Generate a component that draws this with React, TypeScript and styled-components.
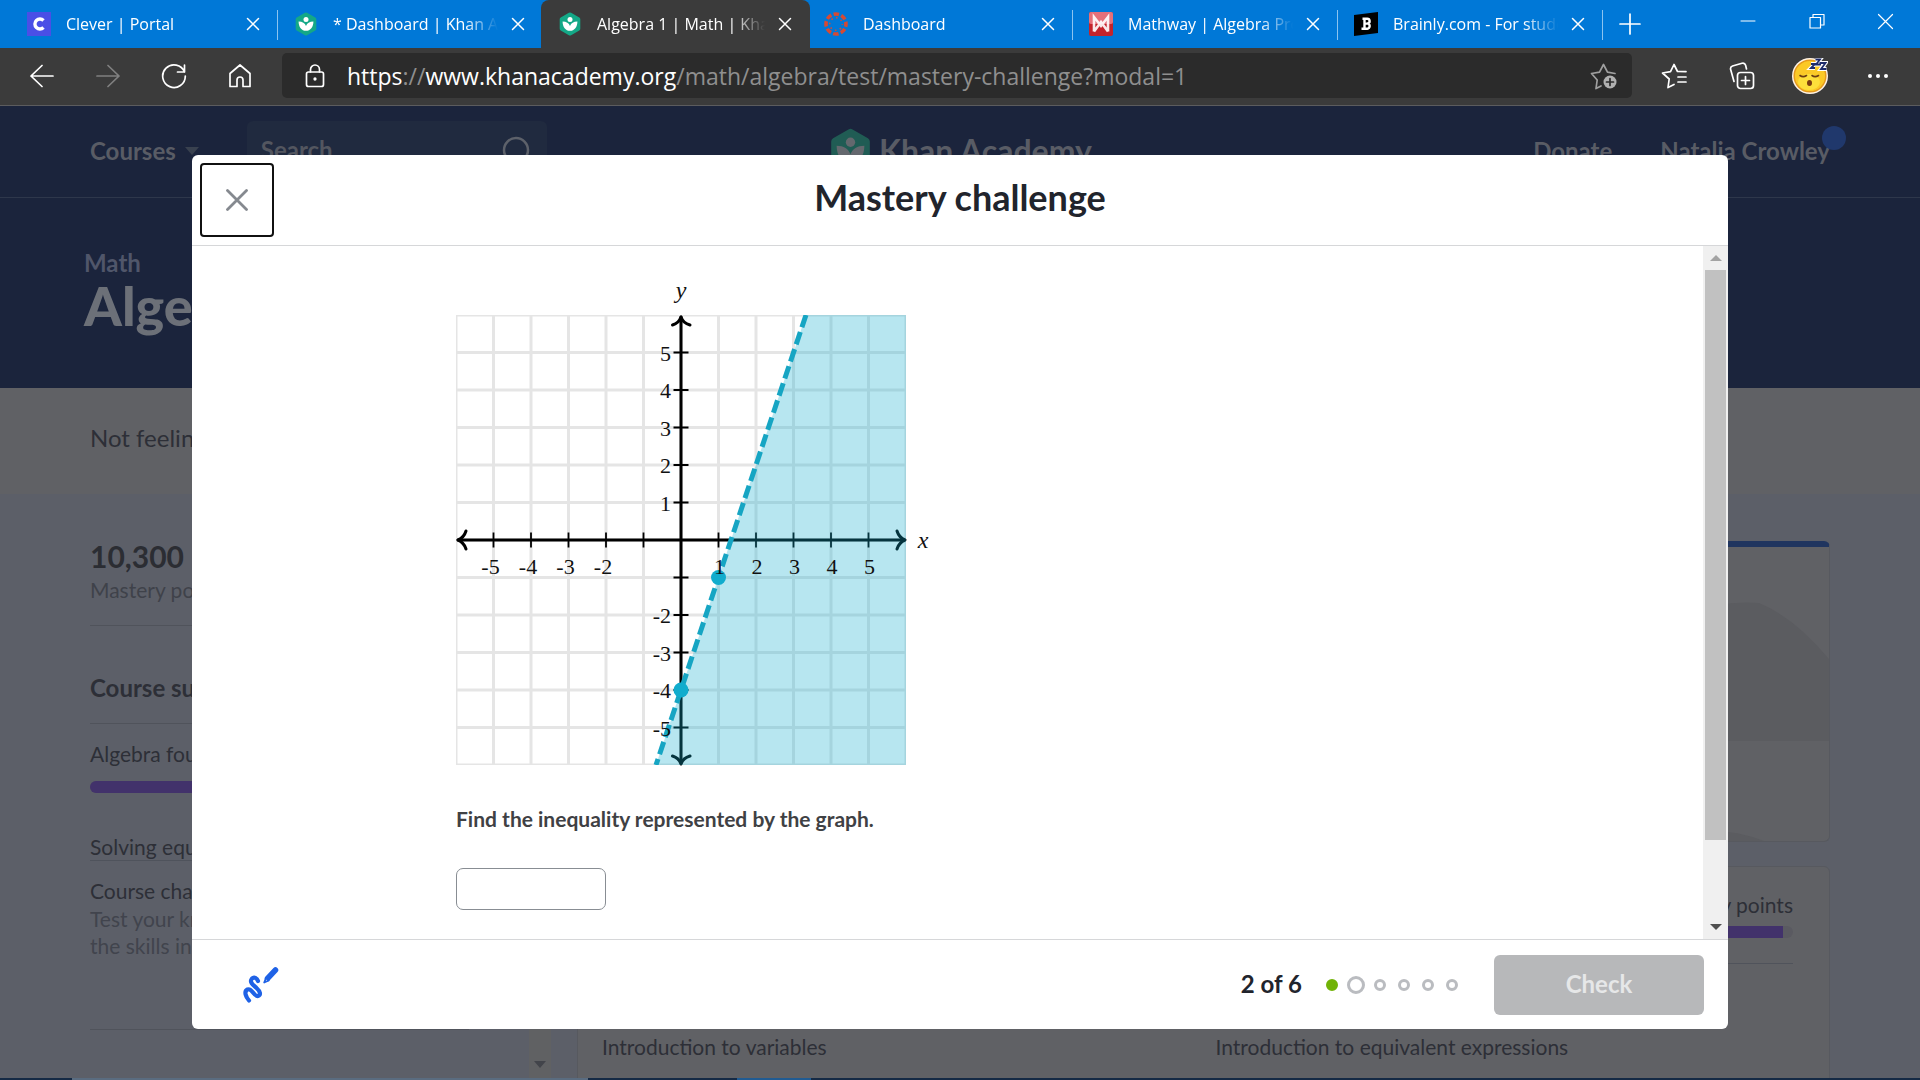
import React from "react";
import styled, { createGlobalStyle } from "styled-components";

const ui = `"Open Sans", "Noto Sans", sans-serif`;
const lato = `Lato, "Noto Sans", sans-serif`;

const GlobalStyle = createGlobalStyle`
  *, *::before, *::after { box-sizing: border-box; }
  body { margin: 0; font-family: ${lato}; }
  button, input { font: inherit; color: inherit; }
  button { border: 0; padding: 0; background: none; cursor: pointer; }
  h1, h2, p { margin: 0; }
  a { color: inherit; text-decoration: none; }
  svg { display: block; flex: none; }
`;

/* ---------- browser window ---------- */

const Screen = styled.div`
  display: flex;
  flex-direction: column;
  height: 100vh;
  overflow: hidden;
`;

const TabStrip = styled.div`
  flex: none;
  display: flex;
  height: 48px;
  background: #0078d7;
  color: #fff;
  font: 16px/24px ${ui};
`;

const Tab = styled.div<{ $active?: boolean; $first?: boolean; $divider?: boolean }>`
  position: relative;
  display: flex;
  align-items: center;
  width: ${(p) => (p.$first ? 278 : p.$active ? 269 : 265)}px;
  margin: 0 ${(p) => (p.$active ? -2 : 0)}px;
  padding: 0 13px 0 ${(p) => (p.$first ? 27 : p.$active ? 17 : 16)}px;
  background: ${(p) => (p.$active ? "#3b3b3b" : "transparent")};
  border-radius: ${(p) => (p.$active ? "8px 8px 0 0" : "0")};
  &::after {
    content: "";
    position: absolute;
    right: 0;
    top: 10px;
    width: 1px;
    height: 30px;
    background: ${(p) => (p.$divider ? "#8cc4f0" : "transparent")};
  }
`;

const TabTitle = styled.span`
  flex: 1;
  min-width: 0;
  margin: 0 8px 0 15px;
  overflow: hidden;
  white-space: nowrap;
  mask-image: linear-gradient(to right, #000 calc(100% - 34px), transparent);
`;

const TabClose = styled.button`
  display: grid;
  place-items: center;
  width: 24px;
  height: 24px;
`;

const NewTab = styled.button`
  display: grid;
  place-items: center;
  width: 54px;
`;

const WindowButtons = styled.div`
  display: flex;
  height: 42px;
  margin-left: auto;
`;

const WindowButton = styled.button`
  display: grid;
  place-items: center;
  width: 69px;
`;

const Toolbar = styled.div`
  flex: none;
  display: flex;
  align-items: center;
  height: 58px;
  padding: 0 8px 2px 9px;
  background: #3b3b3b;
  border-bottom: 1px solid #5c5c5e;
`;

const ToolButton = styled.button<{ $wide?: boolean }>`
  display: grid;
  place-items: center;
  width: ${(p) => (p.$wide ? 68 : 66)}px;
  height: 45px;
`;

const AddressBar = styled.div`
  flex: 1;
  display: flex;
  align-items: center;
  gap: 21px;
  height: 45px;
  margin: 0 8px 0 9px;
  padding: 0 14px 0 22px;
  border-radius: 5px;
  background: #2b2b2b;
`;

const Url = styled.div`
  flex: 1;
  color: #8f8f8f;
  font: 23px/30px ${ui};
  b { color: #fff; font-weight: 400; }
`;

/* ---------- dimmed course page ---------- */

const Page = styled.div`
  position: relative;
  flex: 1;
  min-height: 0;
  display: flex;
  flex-direction: column;
  overflow: hidden;
  background: #5c5f68;
  color: #2d2f37;
  font-size: 21px;
  line-height: 28px;
`;

const SiteHeader = styled.header`
  flex: none;
  display: grid;
  grid-template-columns: 1fr auto 1fr;
  align-items: center;
  height: 92px;
  padding: 0 90px 2px;
  background: #1b243c;
  border-bottom: 1px solid #2e374b;
  color: #595c65;
  font-size: 24px;
  font-weight: 700;
`;

const HeaderLeft = styled.div`
  display: flex;
  align-items: center;
  gap: 48px;
`;

const CoursesLink = styled.a`
  display: flex;
  align-items: center;
  gap: 9px;
`;

const SearchBox = styled.label`
  display: flex;
  align-items: center;
  width: 300px;
  height: 60px;
  padding: 0 14px;
  border-radius: 6px;
  background: #202a3f;
  input {
    flex: 1;
    min-width: 0;
    padding: 0 0 2px;
    border: 0;
    background: none;
  }
  input::placeholder { color: #53565f; opacity: 1; }
`;

const Brand = styled.a`
  display: flex;
  align-items: center;
  gap: 6px;
  font-size: 32px;
`;

const HeaderRight = styled.nav`
  display: flex;
  justify-content: flex-end;
  gap: 48px;
`;

const UserLink = styled.a`
  position: relative;
  &::after {
    content: "";
    position: absolute;
    right: -16px;
    top: -11px;
    width: 24px;
    height: 24px;
    border-radius: 50%;
    background: #20386c;
  }
`;

const Hero = styled.section`
  flex: none;
  height: 190px;
  padding: 53px 84px 0;
  background: #1b243c;
  color: #6c7078;
`;

const Crumb = styled.a`
  display: block;
  color: #50566a;
  font-size: 24px;
  font-weight: 700;
  line-height: 24px;
`;

const CourseTitle = styled.h1`
  font-size: 54px;
  font-weight: 900;
  line-height: 62px;
`;

const Notice = styled.p`
  flex: none;
  height: 106px;
  padding: 34px 90px 0;
  background: #606165;
  font-size: 24px;
  line-height: 32px;
`;

const Columns = styled.div`
  flex: 1;
  min-height: 0;
  display: flex;
  padding-right: 90px;
`;

const Sidebar = styled.aside`
  flex: none;
  display: flex;
  width: 577px;
  padding-right: 26px;
`;

const SidebarBody = styled.div`
  flex: 1;
  padding: 44px 60px 0 90px;
`;

const SidebarRail = styled.div`
  display: flex;
  align-items: flex-end;
  justify-content: center;
  width: 22px;
  padding-bottom: 10px;
  background: #606163;
`;

const Points = styled.p`
  color: #2b2d33;
  font-size: 30px;
  font-weight: 700;
  line-height: 36px;
`;

const PointsLabel = styled.p`
  margin-top: 2px;
  color: #3f424a;
`;

const Rule = styled.hr<{ $gap: number }>`
  height: 1px;
  margin: ${(p) => p.$gap}px 0 0;
  border: 0;
  background: #50535b;
`;

const SummaryTitle = styled.h2`
  margin-top: 46px;
  font-size: 24px;
  font-weight: 700;
  line-height: 32px;
`;

const UnitLink = styled.a<{ $gap: number; $underline?: boolean }>`
  display: block;
  margin-top: ${(p) => p.$gap}px;
  white-space: nowrap;
  line-height: ${(p) => (p.$underline ? 26 : 28)}px;
  border-bottom: ${(p) => (p.$underline ? "1px solid #4f535c" : "0")};
`;

const Meter = styled.div<{ $gap: number }>`
  height: 12px;
  margin-top: ${(p) => p.$gap}px;
  border-radius: 6px;
  overflow: hidden;
  background: #5a5a61;
`;

const MeterFill = styled.div`
  height: 100%;
  background: #42326b;
`;

const Hint = styled.p`
  width: 240px;
  color: #41444d;
  line-height: 27px;
`;

const Main = styled.main`
  flex: 1;
  min-width: 0;
  padding-top: 47px;
`;

const HeroCard = styled.div`
  display: flex;
  justify-content: flex-end;
  height: 301px;
  border: 1px solid #57595f;
  border-top: 6px solid #20355f;
  border-radius: 6px;
  background: #606165;
`;

const UnitCard = styled.div`
  height: 240px;
  margin-top: 24px;
  padding: 24px 36px 0 24px;
  border: 1px solid #57595f;
  border-radius: 6px;
  background: #606165;
`;

const MasteryLabel = styled.p`
  text-align: right;
`;

const LessonGrid = styled.div`
  display: grid;
  grid-template-columns: 1fr 1fr;
  column-gap: 36px;
  margin-top: 69px;
`;

const Taskbar = styled.div`
  flex: none;
  display: flex;
  height: 2px;
  background: #152a45;
`;

const TaskSegment = styled.div<{ $width: number; $color: string }>`
  width: ${(p) => p.$width}px;
  background: ${(p) => p.$color};
`;

/* ---------- dialog ---------- */

const Overlay = styled.div`
  position: absolute;
  inset: 0;
  display: flex;
  padding: 49px 10%;
`;

const Dialog = styled.div`
  flex: 1;
  display: flex;
  flex-direction: column;
  overflow: hidden;
  border-radius: 6px;
  background: #fff;
  color: #21242c;
`;

const DialogHeader = styled.div`
  flex: none;
  display: grid;
  grid-template-columns: 1fr auto 1fr;
  align-items: center;
  height: 91px;
  padding: 0 8px;
  border-bottom: 1px solid #d6d7d9;
`;

const CloseButton = styled.button`
  display: grid;
  place-items: center;
  width: 74px;
  height: 74px;
  border: 2px solid #111;
  border-radius: 4px;
`;

const DialogTitle = styled.h2`
  padding-bottom: 6px;
  font-size: 36px;
  font-weight: 700;
  line-height: 44px;
`;

const DialogBody = styled.div`
  flex: 1;
  min-height: 0;
  display: flex;
`;

const Exercise = styled.div`
  flex: 1;
  padding: 30px 0 0 264px;
  overflow: hidden;
`;

const Question = styled.label`
  display: block;
  margin-top: 37px;
  color: #3f4144;
  font-size: 21px;
  font-weight: 700;
  line-height: 32px;
`;

const Answer = styled.input`
  display: block;
  width: 150px;
  height: 42px;
  margin-top: 33px;
  padding: 0 10px;
  border: 1px solid #888d93;
  border-radius: 7px;
  background: #fff;
`;

const Rail = styled.div`
  flex: none;
  display: flex;
  flex-direction: column;
  width: 25px;
  padding: 0 2px;
  background: #f0f0f0;
`;

const RailArrow = styled.button`
  flex: none;
  display: grid;
  place-items: center;
  height: 24px;
`;

const RailThumb = styled.div`
  flex: 570;
  background: #c1c1c1;
`;

const RailSpace = styled.div`
  flex: 75;
`;

const DialogFooter = styled.div`
  flex: none;
  display: flex;
  align-items: center;
  height: 90px;
  padding: 0 24px 0 50px;
  border-top: 1px solid #d6d7d9;
  font-size: 24px;
  font-weight: 700;
`;

const Progress = styled.div`
  margin-left: auto;
  padding-bottom: 2px;
`;

const Dots = styled.div`
  display: flex;
  align-items: center;
  gap: 12px;
  margin: 0 36px 0 24px;
`;

const Dot = styled.span<{ $state: "done" | "current" | "todo" }>`
  width: ${(p) => (p.$state === "current" ? 18 : 12)}px;
  height: ${(p) => (p.$state === "current" ? 18 : 12)}px;
  margin: 0 ${(p) => (p.$state === "current" ? -3 : 0)}px;
  border: 3px solid ${(p) => (p.$state === "done" ? "#71b307" : "#babcc0")};
  border-radius: 50%;
  background: ${(p) => (p.$state === "done" ? "#71b307" : "#fff")};
`;

const CheckButton = styled.button`
  width: 210px;
  height: 60px;
  padding-bottom: 2px;
  border-radius: 6px;
  background: #b7b8ba;
  color: #e6e7e8;
`;

/* ---------- drawings ---------- */

const Cross = ({ size, color, width = 1.5 }: { size: number; color: string; width?: number }) => (
  <svg width={size} height={size} viewBox={`0 0 ${size} ${size}`} stroke={color} strokeWidth={width} strokeLinecap="round">
    <path d={`M1.5 1.5L${size - 1.5} ${size - 1.5}M${size - 1.5} 1.5L1.5 ${size - 1.5}`} />
  </svg>
);

const Leaf = ({ size, hex, leaf }: { size: number; hex: string; leaf: string }) => (
  <svg width={size} height={size} viewBox="0 0 24 24">
    <path d="M10.9.8a2 2 0 0 1 2.2 0l8.2 4.7a2 2 0 0 1 1 1.8v9.4a2 2 0 0 1-1 1.8l-8.2 4.7a2 2 0 0 1-2.2 0l-8.200-4.700a2 2 0 0 1-1-1.800V7.300a2 2 0 0 1 1-1.800z" fill={hex} />
    <circle cx="12" cy="7.600" r="2.500" fill={leaf} />
    <path d="M12 14c1-3 3.600-4.600 7.400-4.600 0 5.600-3 9.300-7.400 9.300S4.600 15 4.600 9.400C8.400 9.400 11 11 12 14z" fill={leaf} />
  </svg>
);

const CleverIcon = () => (
  <svg width="24" height="24" viewBox="0 0 24 24">
    <rect width="24" height="24" fill="#4a4fe6" />
    <path d="M16.500 8.500A5 5 0 1 0 16.500 15.500" fill="none" stroke="#fff" strokeWidth="3.400" />
  </svg>
);

const CanvasIcon = () => (
  <svg width="24" height="24" viewBox="0 0 24 24" fill="none" stroke="#d64a33">
    <circle cx="12" cy="12" r="10" strokeWidth="3.600" strokeDasharray="5.450 2.400" strokeDashoffset="2.700" />
    <circle cx="12" cy="12" r="6.300" strokeWidth="1.600" strokeDasharray="1.500 3.448" strokeDashoffset="0.700" />
  </svg>
);

const MathwayIcon = () => (
  <svg width="24" height="24" viewBox="0 0 24 24">
    <rect width="24" height="24" rx="2" fill="#c4232b" />
    <rect width="24" height="12" rx="2" fill="#e5707a" />
    <path d="M5 19.500V5L12 14l7-9v14.500M5 19.500L12 10l7 9.500" fill="none" stroke="#fff" strokeWidth="2.600" strokeOpacity="0.900" />
  </svg>
);

const BrainlyIcon = () => (
  <svg width="24" height="24" viewBox="0 0 24 24">
    <path d="M0 3L24 0v21L0 24z" fill="#000" />
    <path d="M8.500 6.800h4.800a2.400 2.400 0 0 1 .6 4.700 2.700 2.700 0 0 1-.6 5.200H7.500M10.500 7v9.500M10.500 11.600h3" fill="none" stroke="#fff" strokeWidth="2.400" />
  </svg>
);

const SleepyFace = () => (
  <svg width="36" height="36" viewBox="0 0 36 36">
    <circle cx="18" cy="18" r="18" fill="#fff3e6" />
    <circle cx="18" cy="18" r="15.800" fill="#fbc926" stroke="#e59a1c" strokeWidth="1.500" />
    <ellipse cx="17" cy="24" rx="11" ry="8" fill="#fddf3b" />
    <path d="M8 17.500q3 2.200 6.500 0M20 17.500q3 2.200 6.500 0" fill="none" stroke="#6b3c12" strokeWidth="1.600" strokeLinecap="round" />
    <ellipse cx="17.500" cy="25" rx="2.500" ry="3" fill="#7a3b10" />
    <path d="M19 6h4l-4 4h4M23.500 1.500h4.500l-4 5h5M27.500 5h6l-4.500 6h5.500" fill="none" stroke="#fff" strokeWidth="4" />
    <path d="M19 6h4l-4 4h4M23.500 1.500h4.500l-4 5h5M27.500 5h6l-4.500 6h5.500" fill="none" stroke="#1d2b6b" strokeWidth="1.800" />
  </svg>
);

const Line = ({ w, h, color = "#fff", children }: { w: number; h: number; color?: string; children: React.ReactNode }) => (
  <svg width={w} height={h} viewBox={`0 0 ${w} ${h}`} fill="none" stroke={color} strokeWidth="1.700" strokeLinecap="round" strokeLinejoin="round">
    {children}
  </svg>
);

const Triangle = ({ up, color, w = 12, h = 6 }: { up?: boolean; color: string; w?: number; h?: number }) => (
  <svg width={w} height={h} viewBox="0 0 12 6" preserveAspectRatio="none" fill={color}>
    <path d={up ? "M0 6L6 0l6 6z" : "M0 0h12L6 6z"} />
  </svg>
);

/* One grid unit is 37.5px; the plane runs from -6 to 6 on both axes. */
const UNIT = 37.5;
const OX = 225;
const OY = 264;
const px = (x: number) => OX + x * UNIT;
const py = (y: number) => OY - y * UNIT;
const ticks = [-5, -4, -3, -2, -1, 1, 2, 3, 4, 5];
const gridLines = Array.from({ length: 13 }, (_, i) => i - 6);

const GraphSvg = styled.svg`
  font: 22px "Liberation Serif", serif;
  overflow: visible;
`;

const Graph = () => (
  <GraphSvg width="480" height="490" viewBox="0 0 480 490" role="img" aria-label="Graph of an inequality">
    <defs>
      <clipPath id="plane">
        <rect x={px(-6)} y={py(6)} width={UNIT * 12} height={UNIT * 12} />
      </clipPath>
    </defs>
    <g clipPath="url(#plane)" stroke="#e5e5e5" strokeWidth="3">
      {gridLines.map((n) => (
        <path key={n} d={`M${px(n)} ${py(6)}V${py(-6)}M${px(-6)} ${py(n)}H${px(6)}`} />
      ))}
    </g>
    <g fill="none" stroke="#000" strokeWidth="3" strokeLinecap="round" strokeLinejoin="round">
      <path d={`M${px(-6) + 2} ${OY}H${px(6) - 2}M${OX} ${py(6) + 2}V${py(-6) - 2}`} />
      <path d={`M${px(6) - 9} ${OY - 9}q2 6.500 8 9q-6 2.500-8 9`} />
      <path d={`M${px(-6) + 10} ${OY - 9}q-2 6.500-8 9q6 2.500 8 9`} />
      <path d={`M${OX - 8.500} ${py(6) + 10}q6.500-2 8.500-8q2 6 9 8`} />
      <path d={`M${OX - 8.500} ${py(-6) - 9}q6.500 2 8.500 8q2-6 9-8`} />
    </g>
    <g stroke="#000" strokeWidth="1.800">
      {ticks.map((n) => (
        <path key={n} d={`M${px(n)} ${OY - 7.500}v15M${OX - 7.500} ${py(n)}h15`} />
      ))}
    </g>
    <path d={`M${px(10 / 3)} ${py(6)}H${px(6)}V${py(-6)}H${px(-2 / 3)}Z`} fill="#11accd" fillOpacity="0.300" />
    <path
      d={`M${px(10 / 3)} ${py(6)}L${px(-2 / 3)} ${py(-6)}`}
      clipPath="url(#plane)"
      stroke="#16a5c3"
      strokeWidth="5"
      strokeDasharray="13 5"
    />
    <circle cx={px(1)} cy={py(-1)} r="7.500" fill="#11accd" />
    <circle cx={px(0)} cy={py(-4)} r="7.500" fill="#11accd" />
    <g fill="#111">
      {ticks.filter((n) => n !== -1).map((n) => (
        <React.Fragment key={n}>
          <text x={px(n) + (n < 0 ? -3 : 1)} y={OY + 34} textAnchor="middle">{n}</text>
          <text x={OX - 10} y={py(n) + 8} textAnchor="end">{n}</text>
        </React.Fragment>
      ))}
      <g fontSize="24" fontStyle="italic">
        <text x={OX} y="22" textAnchor="middle">y</text>
        <text x={px(6) + 17} y={OY + 8} textAnchor="middle">x</text>
      </g>
    </g>
  </GraphSvg>
);

const khan = <Leaf size={24} hex="#14a887" leaf="#fff" />;

const tabs = [
  { title: "Clever | Portal", icon: <CleverIcon />, divider: true },
  { title: "* Dashboard | Khan Academy", icon: khan },
  { title: "Algebra 1 | Math | Khan Academy", icon: khan, active: true },
  { title: "Dashboard", icon: <CanvasIcon />, divider: true },
  { title: "Mathway | Algebra Problem Solver", icon: <MathwayIcon />, divider: true },
  { title: "Brainly.com - For students", icon: <BrainlyIcon />, divider: true },
];

const dots = ["done", "current", "todo", "todo", "todo", "todo"] as const;

export default function App() {
  return (
    <Screen>
      <GlobalStyle />
      <TabStrip>
        {tabs.map((t, i) => (
          <Tab key={t.title} $first={i === 0} $active={t.active} $divider={t.divider}>
            {t.icon}
            <TabTitle>{t.title}</TabTitle>
            <TabClose aria-label="Close tab"><Cross size={14} color="#fff" /></TabClose>
          </Tab>
        ))}
        <NewTab aria-label="New tab">
          <Line w={22} h={22}><path d="M11 1v20M1 11h20" /></Line>
        </NewTab>
        <WindowButtons>
          <WindowButton aria-label="Minimize"><Line w={16} h={16}><path d="M1 8h14" strokeWidth="1" /></Line></WindowButton>
          <WindowButton aria-label="Restore">
            <Line w={16} h={16}><path d="M1 4.500h10.500V15H1zM4 4V1.500h11V12h-3" strokeWidth="1.200" /></Line>
          </WindowButton>
          <WindowButton aria-label="Close"><Cross size={17} color="#fff" width={1.2} /></WindowButton>
        </WindowButtons>
      </TabStrip>

      <Toolbar>
        <ToolButton aria-label="Back"><Line w={24} h={24}><path d="M23 12H1M12 1.500L1 12l11 10.500" /></Line></ToolButton>
        <ToolButton aria-label="Forward"><Line w={24} h={24} color="#808080"><path d="M1 12h22M12 1.500L23 12 12 22.500" /></Line></ToolButton>
        <ToolButton aria-label="Refresh"><Line w={26} h={26}><path d="M23.500 9A11.300 11.300 0 1 0 24.300 13M23.500 2v7h-7" /></Line></ToolButton>
        <ToolButton aria-label="Home">
          <Line w={24} h={26}><path d="M2 10.500L12 2l10 8.500V23.500h-7V17a3 3 0 0 0-6 0v6.500H2z" /></Line>
        </ToolButton>
        <AddressBar>
          <Line w={22} h={26}>
            <rect x="2.500" y="9" width="17" height="14.500" rx="2" />
            <path d="M6.500 9V6.500a4.500 4.500 0 0 1 9 0V9" />
            <circle cx="11" cy="16" r="0.800" fill="#fff" />
          </Line>
          <Url><b>https</b>://<b>www.khanacademy.org</b>/math/algebra/test/mastery-challenge?modal=1</Url>
          <Line w={28} h={28} color="#a0a0a0">
            <path d="M11 24l-5 2.500 1.200-8.500L1.500 11.500l8-1.300L13.500 2.500l4 7.700 7.500 1.300" />
            <circle cx="20" cy="20" r="6.500" fill="#b0b0b0" stroke="none" />
            <path d="M20 16.500v7M16.500 20h7" stroke="#2b2b2b" />
          </Line>
        </AddressBar>
        <ToolButton $wide aria-label="Favorites">
          <Line w={26} h={26}>
            <path d="M13 21.500l-6 3L8.200 16 1.500 10l8-1.300L13 1.500l3.500 7 8.500.2M17 14h8M17 19h8" />
          </Line>
        </ToolButton>
        <ToolButton $wide aria-label="Collections">
          <Line w={26} h={28}>
            <rect x="8.500" y="10.500" width="16" height="16" rx="3" />
            <path d="M16.500 14.500v8M12.500 18.500h8M5 19.500L1.500 7A3 3 0 0 1 3.500 4l9.500-2.800a3 3 0 0 1 3.600 2L17.500 7" />
          </Line>
        </ToolButton>
        <ToolButton $wide aria-label="Profile"><SleepyFace /></ToolButton>
        <ToolButton $wide aria-label="More">
          <svg width="22" height="6" viewBox="0 0 22 6" fill="#fff"><circle cx="3" cy="3" r="2" /><circle cx="11" cy="3" r="2" /><circle cx="19" cy="3" r="2" /></svg>
        </ToolButton>
      </Toolbar>

      <Page>
        <SiteHeader>
          <HeaderLeft>
            <CoursesLink href="#courses">Courses <Triangle color="#39414f" w={14} h={8} /></CoursesLink>
            <SearchBox>
              <input type="text" placeholder="Search" aria-label="Search" />
              <svg width="32" height="32" viewBox="0 0 32 32" fill="none" stroke="#5d616a" strokeWidth="2.500"><circle cx="15" cy="15" r="12" /><path d="M24 24l6 6" /></svg>
            </SearchBox>
          </HeaderLeft>
          <Brand href="#home"><Leaf size={45} hex="#205c54" leaf="#64686e" />Khan Academy</Brand>
          <HeaderRight>
            <a href="#donate">Donate</a>
            <UserLink href="#profile">Natalia Crowley</UserLink>
          </HeaderRight>
        </SiteHeader>
        <Hero>
          <Crumb href="#math">Math</Crumb>
          <CourseTitle>Algebra 1</CourseTitle>
        </Hero>
        <Notice>Not feeling ready for this yet?</Notice>
        <Columns>
          <Sidebar>
            <SidebarBody>
              <Points>10,300</Points>
              <PointsLabel>Mastery points</PointsLabel>
              <Rule $gap={21} />
              <SummaryTitle>Course summary</SummaryTitle>
              <Rule $gap={19} />
              <UnitLink href="#foundations" $gap={16}>Algebra foundations</UnitLink>
              <Meter $gap={13}><MeterFill style={{ width: "99%" }} /></Meter>
              <UnitLink href="#solving" $gap={41} $underline>Solving equations</UnitLink>
              <UnitLink href="#challenge" $gap={16}>Course challenge</UnitLink>
              <Hint>Test your knowledge of<br />the skills in this course.</Hint>
              <Rule $gap={70} />
            </SidebarBody>
            <SidebarRail><Triangle color="#42444a" w={12} h={7} /></SidebarRail>
          </Sidebar>
          <Main>
            <HeroCard>
              <svg width="200" height="294" viewBox="0 0 200 294" fill="#5b5c60">
                <path d="M0 110Q60 50 130 56Q165 70 200 112V194H0z" />
                <path d="M60 285Q100 280 135 294H60z" />
              </svg>
            </HeroCard>
            <UnitCard>
              <MasteryLabel>Mastery points</MasteryLabel>
              <Meter $gap={7}><MeterFill style={{ width: "99.2%" }} /></Meter>
              <Rule $gap={25} />
              <LessonGrid>
                <a href="#variables">Introduction to variables</a>
                <a href="#expressions">Introduction to equivalent expressions</a>
              </LessonGrid>
            </UnitCard>
          </Main>
        </Columns>

        <Overlay>
          <Dialog role="dialog" aria-labelledby="dialog-title">
            <DialogHeader>
              <CloseButton aria-label="Close"><Cross size={22} color="#85898f" width={2.8} /></CloseButton>
              <DialogTitle id="dialog-title">Mastery challenge</DialogTitle>
            </DialogHeader>
            <DialogBody>
              <Exercise>
                <Graph />
                <Question htmlFor="answer">Find the inequality represented by the graph.</Question>
                <Answer id="answer" type="text" />
              </Exercise>
              <Rail>
                <RailArrow aria-label="Scroll up"><Triangle up color="#a3a3a3" /></RailArrow>
                <RailThumb />
                <RailSpace />
                <RailArrow aria-label="Scroll down"><Triangle color="#505050" /></RailArrow>
              </Rail>
            </DialogBody>
            <DialogFooter>
              <button aria-label="Scratchpad">
                <svg width="38" height="38" viewBox="0 0 38 38" fill="none" stroke="#1f62e6" strokeLinecap="round" strokeLinejoin="round">
                  <path d="M33.500 4L25.500 12.500" strokeWidth="5.500" />
                  <path d="M24 12l-1.800 4.500 4.500-2z" strokeWidth="1.800" fill="#fff" />
                  <path d="M16 15c-1-3-4-4.500-6-2.500-3 3.500 1 6.500 4.500 9.500 4 3.500 4.500 7 1.500 8-4 1-6-8.500-10.500-6.500-4 2-1.500 7.500 1.500 11" strokeWidth="4.200" />
                </svg>
              </button>
              <Progress>2 of 6</Progress>
              <Dots>{dots.map((s, i) => <Dot key={i} $state={s} />)}</Dots>
              <CheckButton type="button">Check</CheckButton>
            </DialogFooter>
          </Dialog>
        </Overlay>
      </Page>
      <Taskbar>
        <TaskSegment $width={72} $color="#152a45" />
        <TaskSegment $width={516} $color="#5a6c80" />
        <TaskSegment $width={149} $color="#152a45" />
        <TaskSegment $width={74} $color="#205b92" />
      </Taskbar>
    </Screen>
  );
}
